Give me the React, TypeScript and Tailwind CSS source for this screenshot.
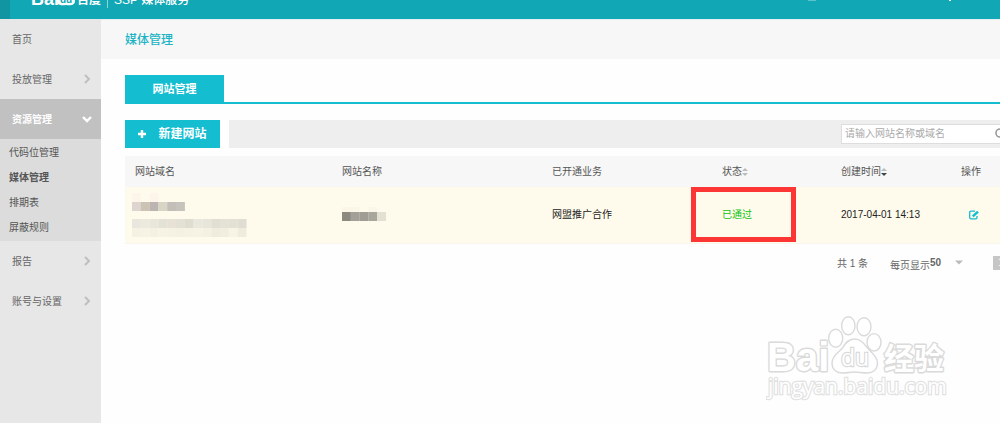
import React from "react";

const NAME_BLOCKS = ["#ded5d0", "#cdc3b5", "#bbb4b3", "#d9d5c5", "#c3beb8", "#c6c2bc"];
const URL_BLOCKS = [
  ["#e9e7dd", "#eceade", "#e9e7db", "#e4e2d6", "#e8e2d6", "#e3e1d5", "#dfddd0", "#e8e8de", "#e8e6da", "#e1dfd3", "#e4e2d5", "#e3e1d5", "#e0ded2"],
  ["#f5f2e4", "#f6f3e5", "#f4f1e3", "#f6f3e5", "#f5f2e4", "#f4f1e3", "#f5f2e4", "#f6f3e5", "#f4f1e3", "#efecde", "#f1eee0", "#f7f4e6", "#efecde"],
];
const TITLE_BLOCKS = ["#8c8981", "#a3a098", "#a09d95", "#a9a69e", "#e4e0d2"];

function Blocks({ colors, x = 0, y, h = 9 }: { colors: string[]; x?: number; y: number; h?: number }) {
  return (
    <>
      {colors.map((c, i) => (
        <rect key={i} x={x + i * 8.8} y={y} width={8.9} height={h} fill={c} />
      ))}
    </>
  );
}

function Chevron({ open = false }: { open?: boolean }) {
  return open ? (
    <svg className="size-3" viewBox="0 0 12 12" fill="none" stroke="#fff" strokeWidth="2.4" aria-hidden="true">
      <path d="M2 4l4 4 4-4" />
    </svg>
  ) : (
    <svg className="size-3" viewBox="0 0 12 12" fill="none" stroke="#c0bebe" strokeWidth="2" aria-hidden="true">
      <path d="M4 2l4 4-4 4" />
    </svg>
  );
}

function NavItem({ label, arrow = true }: { label: string; arrow?: boolean }) {
  return (
    <a href="#" className="flex h-10 items-center justify-between pl-3 pr-2 text-[#666]">
      <span className="pt-0.5">{label}</span>
      {arrow && <Chevron />}
    </a>
  );
}

function Sort({ up, down }: { up: string; down: string }) {
  return (
    <svg className="h-2 w-1.5" viewBox="0 0 6 8" aria-hidden="true">
      <path d="M3 0l3 3H0z" fill={up} />
      <path d="M0 5h6L3 8z" fill={down} />
    </svg>
  );
}

function Watermark() {
  return (
    <svg className="h-[90px] w-[184px]" viewBox="0 0 184 90" fill="#fff" stroke="#dadada" strokeWidth="1.4" aria-hidden="true">
      <g strokeWidth="2.8" strokeLinejoin="round" style={{ paintOrder: "stroke" }}>
        <text x="1" y="56" fontSize="40" fontWeight="700" fontFamily="Liberation Sans, sans-serif">Bai</text>
        <text x="118" y="54" fontSize="30" fontWeight="700" fontFamily="Noto Sans CJK SC, sans-serif">经验</text>
      </g>
      <ellipse cx="69.7" cy="23.3" rx="7" ry="9" />
      <ellipse cx="82.3" cy="10.7" rx="6.7" ry="9" />
      <ellipse cx="98" cy="11.7" rx="7" ry="9" />
      <ellipse cx="108" cy="27.3" rx="7" ry="8.7" />
      <path d="M88.500 24c-6 0-9 4-12 9-3 4-10.500 7-10.500 15 0 7 5 10 11 10 4 0 7.500-1 11.500-1s8 1 12 1c7 0 11-4 11-10 0-7-7-11-10-15-4-5-7-9-13-9z" />
      <text x="75" y="51" fontSize="23" fontWeight="400" fontFamily="Open Sans, sans-serif" strokeWidth="2.4" style={{ paintOrder: "stroke" }}>du</text>
      <text x="2" y="79" fontSize="21" fontWeight="400" fontFamily="Open Sans, sans-serif" stroke="#e2e2e2" strokeWidth="2.4" style={{ paintOrder: "stroke" }}>jingyan.baidu.com</text>
    </svg>
  );
}

export default function App() {
  return (
    <div className="relative flex min-h-screen flex-col overflow-hidden bg-[#fefefe] text-[10px] leading-4 text-[#555] [font-family:'Liberation_Sans','Noto_Sans_CJK_SC',sans-serif]">
      <header className="relative flex h-[19px] overflow-hidden bg-[#11a7b5] text-white">
        <div className="w-2.5 bg-[#1195a2]" />
        <div className="-mt-3 ml-[21px] flex h-6 items-center whitespace-nowrap">
          <svg className="h-6 w-[46px]" viewBox="0 0 46 24" fill="#fff" aria-hidden="true">
            <text x="0" y="17" fontSize="18" fontWeight="700" fontFamily="Liberation Sans, sans-serif">Bai</text>
            <path d="M26 13c0-4 4-6 9-8 5 2 9 4 9 8s-4 5-9 4c-5 1-9 0-9-4z" />
            <text x="29" y="15" fontSize="10" fontWeight="700" fill="#11a7b5" fontFamily="Liberation Sans, sans-serif">du</text>
          </svg>
          <span className="text-xs font-bold">百度</span>
          <span className="mx-1.5 h-4 w-px bg-[#8fd3da]" />
          <span className="text-xs font-medium">SSP 媒体服务</span>
        </div>
        <span className="absolute right-[184px] top-0 h-px w-2 bg-[#5cc3cc]" />
        <span className="absolute right-[49px] top-0 h-px w-0.5 bg-white" />
      </header>

      <div className="flex flex-1">
        <nav className="w-[101px] shrink-0 bg-[#e7e7e7]">
          <NavItem label="首页" arrow={false} />
          <NavItem label="投放管理" />
          <a href="#" className="flex h-10 items-center justify-between bg-[#c1c1c1] pl-3 pr-2 font-bold text-white">
            <span className="pt-0.5">资源管理</span>
            <Chevron open />
          </a>
          <div className="grid h-[102px] grid-rows-4 items-center bg-[#dcdcdc] pl-[9px] pt-px">
            <a href="#">代码位管理</a>
            <a href="#" className="font-bold">媒体管理</a>
            <a href="#">排期表</a>
            <a href="#">屏蔽规则</a>
          </div>
          <NavItem label="报告" />
          <NavItem label="账号与设置" />
        </nav>

        <main className="min-w-0 flex-1">
          <h1 className="flex h-10 items-center border-t border-[#e3eff1] bg-[#f7f7f7] pl-6 text-xs font-medium text-[#1cb4c5]">
            媒体管理
          </h1>
          <div className="pl-6 pt-4">
            <div className="flex border-b-2 border-[#14bdd0]">
              <button className="h-[27px] w-[99px] bg-[#14bdd0] text-[11px] font-bold text-white">网站管理</button>
            </div>

            <div className="mt-4 flex h-7 gap-[9px]">
              <button className="flex w-[95px] items-center justify-center gap-3 bg-[#14bdd0] text-xs font-bold text-white">
                <svg className="size-2" viewBox="0 0 8 8" stroke="#fff" strokeWidth="2.4" aria-hidden="true">
                  <path d="M4 0v8M0 4h8" />
                </svg>
                新建网站
              </button>
              <div className="flex flex-1 items-center justify-end bg-[#eee]">
                <div className="flex h-5 w-[159px] items-center overflow-hidden border border-r-0 border-[#ddd] bg-white">
                  <input
                    aria-label="请输入网站名称或域名"
                    placeholder="请输入网站名称或域名"
                    className="w-[153px] shrink-0 pl-[3px] outline-none placeholder:text-[#aaa]"
                  />
                  <svg className="size-3 shrink-0" viewBox="0 0 12 12" fill="none" stroke="#999" strokeWidth="1.6" aria-hidden="true">
                    <circle cx="5" cy="5" r="4" />
                    <path d="M8 8l3 3" />
                  </svg>
                </div>
              </div>
            </div>

            <table className="mt-2 w-full table-fixed border-collapse text-left">
              <colgroup>
                <col />
                <col className="w-[210px]" />
                <col className="w-[170px]" />
                <col className="w-[119px]" />
                <col className="w-[120px]" />
                <col className="w-[49px]" />
              </colgroup>
              <thead>
                <tr className="h-[31px] bg-[#f7f7f7] [&>th]:pl-2.5 [&>th]:font-normal">
                  <th>网站域名</th>
                  <th>网站名称</th>
                  <th>已开通业务</th>
                  <th>
                    <span className="flex items-center">状态<Sort up="#bbb" down="#bbb" /></span>
                  </th>
                  <th>
                    <span className="flex items-center">创建时间<Sort up="#bbb" down="#444" /></span>
                  </th>
                  <th>操作</th>
                </tr>
              </thead>
              <tbody>
                <tr className="h-14 border-b border-[#f7f7f0] bg-[#fffbec] text-[#222] [&>td]:pl-2.5">
                  <td>
                    <svg className="-ml-[3px] h-11 w-[115px]" viewBox="0 0 115 44" aria-hidden="true">
                      <Blocks colors={["#fdf5ea", "#fffbec", "#fdf5ea"]} y={0} />
                      <Blocks colors={NAME_BLOCKS} y={9} />
                      <Blocks colors={URL_BLOCKS[0]} y={26} />
                      <Blocks colors={URL_BLOCKS[1]} y={35} />
                    </svg>
                  </td>
                  <td>
                    <svg className="h-4 w-[45px]" viewBox="0 0 45 16" aria-hidden="true">
                      <Blocks colors={["#faf6e8", "#faf6e8", "#fffbec", "#faf6e8"]} y={0} h={6} />
                      <Blocks colors={TITLE_BLOCKS} y={5} />
                    </svg>
                  </td>
                  <td>网盟推广合作</td>
                  <td className="relative text-[#10c410]">
                    已通过
                    <span className="absolute -left-[21px] top-0 h-[55px] w-[105px] border-5 border-[#fc3535]" />
                  </td>
                  <td>2017-04-01 14:13</td>
                  <td>
                    <button aria-label="编辑" className="ml-2 block">
                      <svg className="size-2.5" viewBox="0 0 10 10" fill="none" stroke="#14bdd0" aria-hidden="true">
                        <path d="M6 1.2H2Q.7 1.2.7 2.5v5Q.7 8.800 2 8.800h4.700Q8 8.800 8 7.500V6" strokeWidth="1.3" />
                        <path d="M3.800 6.400L9 1.600" strokeWidth="2.5" />
                      </svg>
                    </button>
                  </td>
                </tr>
              </tbody>
            </table>

            <div className="mt-2 flex items-center justify-end text-[#666]">
              <span className="pt-0.5">共 1 条</span>
              <label htmlFor="page-size" className="ml-[22px] pt-1.5">每页显示</label>
              <span className="relative flex items-center">
                <select id="page-size" defaultValue="50" className="w-[35px] appearance-none bg-transparent font-bold outline-none">
                  <option>50</option>
                </select>
                <svg className="pointer-events-none absolute right-0.5 h-[5px] w-2" viewBox="0 0 10 5" fill="#bbb" aria-hidden="true">
                  <path d="M0 0h10L5 5z" />
                </svg>
              </span>
              <span className="ml-7 h-3.5 w-[7px] overflow-hidden bg-[#c6c6c6] pl-[5px] leading-[14px] text-white">1</span>
            </div>
          </div>
        </main>
      </div>

      <div className="pointer-events-none absolute bottom-[18px] right-[50px]">
        <Watermark />
      </div>
    </div>
  );
}
